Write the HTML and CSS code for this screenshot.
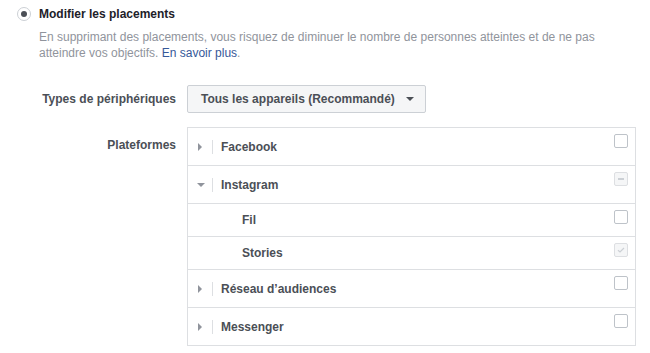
FILE: index.html
```html
<!DOCTYPE html>
<html>
<head>
    <meta charset="UTF-8">
    <link rel="stylesheet" href="styles.css">
</head>
<body>
<div class="placements">

    <div class="option">
        <span class="radio"><span class="radio-dot"></span></span>
        <span class="option-title">Modifier les placements</span>
    </div>

    <p class="hint">En supprimant des placements, vous risquez de diminuer le nombre de personnes atteintes et de ne pas atteindre vos objectifs. <a href="#">En savoir plus</a>.</p>

    <div class="field field-devices">
        <div class="field-label">Types de périphériques</div>
        <div class="select">
            <span>Tous les appareils (Recommandé)</span>
            <span class="caret"></span>
        </div>
    </div>

    <div class="field field-platforms">
        <div class="field-label">Plateformes</div>
        <div class="platforms">
            <div class="row">
                <span class="toggle"><span class="arrow-right"></span></span>
                <span class="name">Facebook</span>
                <span class="check"></span>
            </div>
            <div class="row">
                <span class="toggle"><span class="arrow-down"></span></span>
                <span class="name">Instagram</span>
                <span class="check disabled"><span class="dash"></span></span>
            </div>
            <div class="row row-child">
                <span class="name">Fil</span>
                <span class="check"></span>
            </div>
            <div class="row row-child">
                <span class="name">Stories</span>
                <span class="check disabled">
                    <svg width="8" height="6" viewBox="0 0 8 6"><path d="M1 3.2 L3 5 L7 1" fill="none" stroke="#ccd0d5" stroke-width="1.2"/></svg>
                </span>
            </div>
            <div class="row">
                <span class="toggle"><span class="arrow-right"></span></span>
                <span class="name">Réseau d’audiences</span>
                <span class="check"></span>
            </div>
            <div class="row">
                <span class="toggle"><span class="arrow-right"></span></span>
                <span class="name">Messenger</span>
                <span class="check"></span>
            </div>
        </div>
    </div>

</div>
</body>
</html>
```

FILE: styles.css
```css
* {
    margin: 0;
    padding: 0;
    box-sizing: border-box;
}

body {
    background-color: #ffffff;
    font-family: "Liberation Sans", Arial, sans-serif;
    font-size: 12px;
    line-height: 16px;
    color: #4b4f56;
}

.placements {
    padding: 6px 0 0 17px;
}

/* bouton radio + titre */
.option {
    display: flex;
    align-items: center;
}

.radio {
    width: 14px;
    height: 14px;
    border: 1px solid #ccd0d5;
    border-radius: 50%;
    background-color: #ffffff;
    display: flex;
    align-items: center;
    justify-content: center;
    margin-right: 8px;
}

.radio-dot {
    width: 6px;
    height: 6px;
    border-radius: 50%;
    background-color: #4b4f56;
}

.option-title {
    font-weight: bold;
    color: #1d2129;
}

.hint {
    margin: 7px 0 0 22px;
    width: 575px;
    color: #90949c;
}

.hint a {
    color: #365899;
    text-decoration: none;
}

/* lignes label / contrôle */
.field {
    display: flex;
    align-items: flex-start;
    padding-left: 22px;
}

.field-label {
    width: 137px;
    margin-right: 11px;
    text-align: right;
    font-weight: bold;
    color: #4b4f56;
}

.field-devices {
    margin-top: 24px;
    align-items: center;
}

.select {
    width: 239px;
    height: 28px;
    display: flex;
    align-items: center;
    justify-content: space-between;
    padding: 0 11px 0 13px;
    border: 1px solid #ccd0d5;
    border-radius: 2px;
    background-color: #f5f6f7;
    font-weight: bold;
    color: #4b4f56;
}

.caret {
    width: 0;
    height: 0;
    border-left: 4px solid transparent;
    border-right: 4px solid transparent;
    border-top: 4px solid #4b4f56;
}

.field-platforms {
    margin-top: 14px;
}

.field-platforms .field-label {
    padding-top: 10px;
}

/* tableau des plateformes */
.platforms {
    width: 449px;
    border: 1px solid #dddfe2;
}

.row {
    height: 38px;
    display: flex;
    align-items: center;
    padding: 0 7px 0 9px;
    border-top: 1px solid #dddfe2;
    font-weight: bold;
    color: #4b4f56;
}

.row:first-child {
    height: 37px;
    border-top: none;
}

.row-child {
    height: 33px;
    padding-left: 54px;
}

.toggle {
    width: 16px;
    height: 14px;
    display: flex;
    align-items: center;
    border-right: 1px solid #dddfe2;
    margin-right: 8px;
}

.arrow-right {
    margin-left: 1px;
    width: 0;
    height: 0;
    border-top: 4px solid transparent;
    border-bottom: 4px solid transparent;
    border-left: 4px solid #90949c;
}

.arrow-down {
    width: 0;
    height: 0;
    border-left: 4px solid transparent;
    border-right: 4px solid transparent;
    border-top: 4px solid #90949c;
}

.name {
    flex: 1;
}

.check {
    align-self: flex-start;
    margin-top: 6px;
    width: 14px;
    height: 14px;
    border: 1px solid #bec3c9;
    border-radius: 2px;
    background-color: #ffffff;
    display: flex;
    align-items: center;
    justify-content: center;
}

.check.disabled {
    border-color: #dddfe2;
    background-color: #f5f6f7;
}

.dash {
    width: 6px;
    height: 2px;
    background-color: #ccd0d5;
}
```
